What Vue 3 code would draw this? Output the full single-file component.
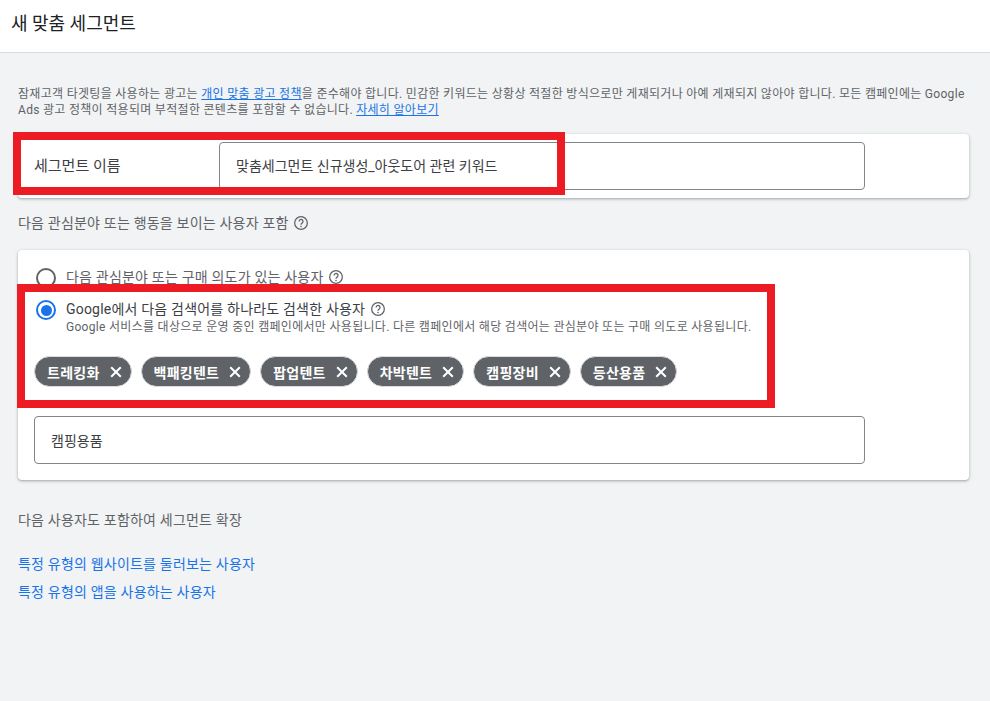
<script setup>
const chips = ['트레킹화', '백패킹텐트', '팝업텐트', '차박텐트', '캠핑장비', '등산용품']
</script>

<template>
  <div class="page">
    <header class="top">새 맞춤 세그먼트</header>
    <main class="content">
      <p class="notice">잠재고객 타겟팅을 사용하는 광고는 <a class="u">개인 맞춤 광고 정책</a>을 준수해야 합니다. 민감한 키워드는 상황상 적절한 방식으로만 게재되거나 아예 게재되지 않아야 합니다. 모든 캠페인에는 Google Ads 광고 정책이 적용되며 부적절한 콘텐츠를 포함할 수 없습니다. <a class="u">자세히 알아보기</a></p>

      <section class="card name-card">
        <span class="name-label">세그먼트 이름</span>
        <div class="input name-input">맞춤세그먼트 신규생성_아웃도어 관련 키워드</div>
      </section>

      <h2 class="section-title">다음 관심분야 또는 행동을 보이는 사용자 포함
        <svg class="help" viewBox="0 0 24 24"><circle cx="12" cy="12" r="9.5"/><path d="M9.2 9.6a2.9 2.9 0 1 1 4.6 2.3c-1.1.8-1.8 1.4-1.8 2.7"/><circle class="dot" cx="12" cy="17.3" r="1.2"/></svg>
      </h2>

      <section class="card opts-card">
        <div class="opt opt-a">
          <span class="radio"></span>
          <span class="opt-label">다음 관심분야 또는 구매 의도가 있는 사용자</span>
          <svg class="help" viewBox="0 0 24 24"><circle cx="12" cy="12" r="9.5"/><path d="M9.2 9.6a2.9 2.9 0 1 1 4.6 2.3c-1.1.8-1.8 1.4-1.8 2.7"/><circle class="dot" cx="12" cy="17.3" r="1.2"/></svg>
        </div>
        <div class="opt opt-b">
          <span class="radio on"></span>
          <div>
            <div class="opt-head">
              <span class="opt-label">Google에서 다음 검색어를 하나라도 검색한 사용자</span>
              <svg class="help" viewBox="0 0 24 24"><circle cx="12" cy="12" r="9.5"/><path d="M9.2 9.6a2.9 2.9 0 1 1 4.6 2.3c-1.1.8-1.8 1.4-1.8 2.7"/><circle class="dot" cx="12" cy="17.3" r="1.2"/></svg>
            </div>
            <div class="opt-sub">Google 서비스를 대상으로 운영 중인 캠페인에서만 사용됩니다. 다른 캠페인에서 해당 검색어는 관심분야 또는 구매 의도로 사용됩니다.</div>
          </div>
        </div>
        <div class="chips">
          <span v-for="c in chips" :key="c" class="chip">
            {{ c }}
            <svg class="x" viewBox="0 0 12 12"><path d="M1.2 1.2 10.8 10.8M10.8 1.2 1.2 10.8"/></svg>
          </span>
        </div>
        <div class="input term-input">캠핑용품</div>
      </section>

      <h2 class="section-title expand">다음 사용자도 포함하여 세그먼트 확장</h2>
      <a class="link first">특정 유형의 웹사이트를 둘러보는 사용자</a>
      <a class="link">특정 유형의 앱을 사용하는 사용자</a>
    </main>

    <div class="mark mark-name"></div>
    <div class="mark mark-search"></div>
  </div>
</template>

<style scoped>
.page {
  position: relative;
  height: 701px;
  overflow: hidden;
  background: #f1f3f4;
  font-family: Roboto, "Noto Sans CJK KR", sans-serif;
  color: #3c4043;
}
.top {
  box-sizing: border-box;
  height: 53px;
  padding: 12px 0 0 11px;
  background: #fff;
  border-bottom: 1px solid #dadce0;
  font-size: 18px;
  line-height: 24px;
  color: #202124;
}
.content {
  padding: 33px 21px 0 18px;
}
.notice {
  margin: 0;
  font-size: 12px;
  line-height: 16px;
  letter-spacing: .3px;
  color: #5f6368;
}
.u {
  color: #1a73e8;
  text-decoration: underline;
}
.card {
  background: #fff;
  border-radius: 4px;
  box-shadow: 0 1px 2px rgba(60, 64, 67, .3), 0 1px 3px 1px rgba(60, 64, 67, .12);
}
.name-card {
  display: flex;
  align-items: center;
  height: 64px;
  margin-top: 16px;
  padding-left: 16px;
}
.name-label {
  width: 185px;
  margin-top: -4px;
  font-size: 15px;
  color: #3c4043;
}
.input {
  box-sizing: border-box;
  height: 48px;
  border: 1px solid #80868b;
  border-radius: 4px;
  display: flex;
  align-items: center;
  padding: 0 0 0 16px;
  font-size: 14px;
  color: #3c4043;
}
.name-input {
  width: 646px;
  padding-bottom: 2px;
}
.section-title {
  display: flex;
  align-items: center;
  gap: 4px;
  margin: 15px 0 0;
  height: 20px;
  font-size: 14px;
  font-weight: 400;
  line-height: 20px;
  letter-spacing: .2px;
  color: #5f6368;
}
.help {
  flex: none;
  width: 16px;
  height: 16px;
  fill: none;
  stroke: #5f6368;
  stroke-width: 1.9;
}
.help .dot {
  fill: #5f6368;
  stroke: none;
}
.opts-card {
  height: 230px;
  margin-top: 17px;
  padding: 18px 16px 0 16px;
  box-sizing: border-box;
}
.opt {
  display: flex;
  align-items: flex-start;
}
.radio {
  flex: none;
  width: 20px;
  height: 20px;
  box-sizing: border-box;
  border: 2.5px solid #5f6368;
  border-radius: 50%;
  margin: 0 2px;
  position: relative;
}
.radio.on {
  border-color: #1a73e8;
}
.radio.on::after {
  content: "";
  position: absolute;
  inset: 2.5px;
  border-radius: 50%;
  background: #1a73e8;
}
.opt-a {
  height: 32px;
  gap: 8px;
}
.opt-a .opt-label {
  margin-top: -1px;
  color: #5f6368;
}
.opt-a .help {
  margin: 1px 0 0 -3px;
}
.opt-label {
  font-size: 14px;
  line-height: 20px;
  letter-spacing: .2px;
  color: #3c4043;
}
.opt-b {
  gap: 8px;
}
.opt-head {
  display: flex;
  align-items: center;
  gap: 5px;
  height: 20px;
  margin-top: -1px;
}
.opt-sub {
  font-size: 12px;
  line-height: 16px;
  letter-spacing: .3px;
  color: #5f6368;
  white-space: nowrap;
}
.chips {
  display: flex;
  gap: 9px;
  margin-top: 21px;
}
.chip {
  display: inline-flex;
  align-items: center;
  box-sizing: border-box;
  height: 31px;
  padding: 0 9px 0 12px;
  gap: 10px;
  border-radius: 16px;
  background: #5f6368;
  border: 1px solid #dadce0;
  color: #fff;
  font-size: 14px;
  font-weight: 700;
  letter-spacing: .25px;
  white-space: nowrap;
}
.x {
  width: 12px;
  height: 12px;
  fill: none;
  stroke: #fff;
  stroke-width: 2;
}
.term-input {
  width: 831px;
  margin-top: 29px;
}
.expand {
  margin-top: 30px;
}
.link {
  display: block;
  font-size: 14px;
  line-height: 20px;
  letter-spacing: .2px;
  color: #1a73e8;
  margin-top: 8px;
}
.link.first {
  margin-top: 24px;
}
.mark {
  position: absolute;
  box-sizing: border-box;
  border: 8px solid #ed1c24;
  pointer-events: none;
}
.mark-name {
  left: 13px;
  top: 132px;
  width: 552px;
  height: 63px;
}
.mark-search {
  left: 17px;
  top: 284px;
  width: 758px;
  height: 124px;
}
</style>
